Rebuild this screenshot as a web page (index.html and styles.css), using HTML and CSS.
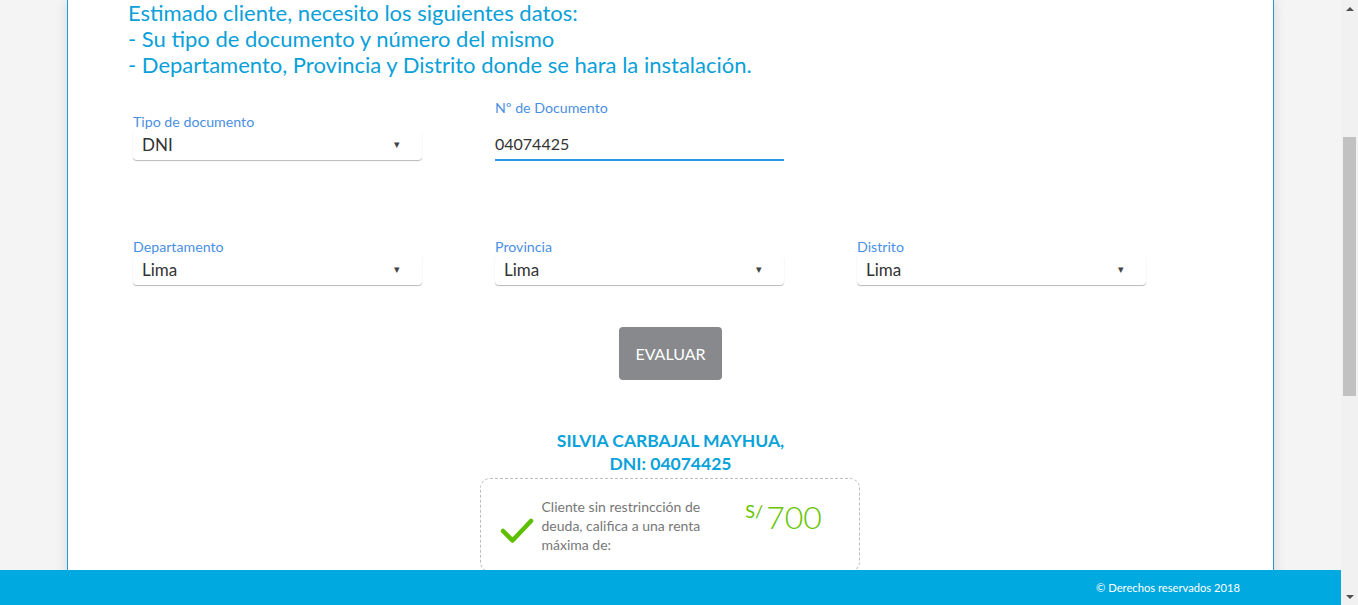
FILE: index.html
```html
<!DOCTYPE html>
<html lang="es">
<head>
<meta charset="utf-8">
<title>Evaluación</title>
<link rel="stylesheet" href="styles.css">
</head>
<body>
<div class="viewport">
  <div class="main">
    <div class="panel">
      <div class="intro">
        Estimado cliente, necesito los siguientes datos:<br>
        - Su tipo de documento y número del mismo<br>
        - Departamento, Provincia y Distrito donde se hara la instalación.
      </div>

      <div class="form-row row-one">
        <div class="field field-select">
          <div class="label">Tipo de documento</div>
          <div class="select"><span>DNI</span><span class="caret">&#9662;</span></div>
        </div>
        <div class="field field-input">
          <div class="label">Nº de Documento</div>
          <div class="input">04074425</div>
        </div>
      </div>

      <div class="form-row row-two">
        <div class="field field-select">
          <div class="label">Departamento</div>
          <div class="select"><span>Lima</span><span class="caret">&#9662;</span></div>
        </div>
        <div class="field field-select">
          <div class="label">Provincia</div>
          <div class="select"><span>Lima</span><span class="caret">&#9662;</span></div>
        </div>
        <div class="field field-select">
          <div class="label">Distrito</div>
          <div class="select"><span>Lima</span><span class="caret">&#9662;</span></div>
        </div>
      </div>

      <div class="actions">
        <button class="btn-evaluar" type="button">EVALUAR</button>
      </div>

      <div class="client-name">SILVIA CARBAJAL MAYHUA,<br>DNI: 04074425</div>

      <div class="result-card">
        <svg class="check" width="34" height="28" viewBox="0 0 34 28">
          <path d="M3 15 L12.5 24.5 L31 5" fill="none" stroke="#5cc000" stroke-width="4.5" stroke-linecap="round" stroke-linejoin="round"/>
        </svg>
        <div class="result-text">Cliente sin restrincción de<br>deuda, califica a una renta<br>máxima de:</div>
        <div class="amount"><span class="currency">S/</span><span class="value">700</span></div>
      </div>
    </div>
  </div>
  <div class="scrollbar">
    <div class="sb-btn"><span class="tri-up"></span></div>
    <div class="sb-track"><div class="sb-thumb"></div></div>
    <div class="sb-btn"><span class="tri-down"></span></div>
  </div>
</div>
<footer class="footer">© Derechos reservados 2018</footer>
</body>
</html>
```

FILE: styles.css
```css
* { box-sizing: border-box; }

html, body {
  margin: 0;
  padding: 0;
  height: 605px;
  overflow: hidden;
}

body {
  font-family: Lato, "Open Sans", "Liberation Sans", sans-serif;
  background: #f4f4f4;
  color: #333;
}

.viewport {
  display: flex;
  height: 605px;
}

.main {
  flex: 1;
  display: flex;
  justify-content: center;
  background: #f4f4f4;
  overflow: hidden;
}

.panel {
  width: 1207px;
  min-height: 700px;
  background: #fff;
  border-left: 1px solid #1e9bd7;
  border-right: 1px solid #1e9bd7;
  box-shadow: 0 0 12px rgba(0, 0, 0, 0.12);
  padding: 0 0 0 60px;
}

.intro {
  color: #0aa0d8;
  font-size: 22px;
  line-height: 26px;
}

.form-row {
  display: grid;
  grid-template-columns: repeat(3, 289px);
  column-gap: 73px;
  align-items: end;
  padding-left: 5px;
}

.row-one { margin-top: 22px; }
.row-two { margin-top: 78px; }

.label {
  color: #4a90e2;
  font-size: 14.2px;
  line-height: 16px;
}

.field-select { margin-bottom: 1px; }

.select {
  height: 30px;
  display: flex;
  align-items: center;
  justify-content: space-between;
  padding: 0 22px 2px 9px;
  font-size: 17px;
  color: #333;
  border-radius: 4px;
  box-shadow: 0 1px 1px rgba(0, 0, 0, 0.28);
}

.caret {
  font-size: 11px;
  color: #444;
}

.input {
  padding: 18px 0 5px 0;
  line-height: 20px;
  font-size: 16px;
  color: #333;
  border-bottom: 2px solid #2f96f0;
}

.actions {
  display: flex;
  justify-content: center;
  margin: 41px 60px 0 0;
}

.btn-evaluar {
  width: 103px;
  height: 53px;
  border: none;
  border-radius: 4px;
  background: #88898c;
  color: #fff;
  font-family: inherit;
  font-size: 16px;
  padding: 0;
}

.client-name {
  margin: 49px 60px 0 0;
  text-align: center;
  color: #0aa2da;
  font-weight: 700;
  font-size: 17.5px;
  line-height: 23px;
}

.result-card {
  width: 380px;
  margin: 3px auto 0;
  position: relative;
  left: -31px;
  border: 1px dashed #bdbdbd;
  border-radius: 10px;
  display: flex;
  align-items: flex-start;
  padding: 18px 20px 16px 19px;
  height: 94px;
}

.check {
  margin-top: 19px;
  flex: none;
}

.result-text {
  margin-left: 8px;
  color: #777;
  font-size: 14px;
  line-height: 19px;
  white-space: nowrap;
}

.amount {
  margin-left: 45px;
  color: #66c400;
  display: flex;
  align-items: flex-start;
}

.currency {
  font-size: 18px;
  line-height: 22px;
  margin-top: 3px;
  margin-right: 3px;
}

.value {
  font-size: 32px;
  font-weight: 300;
  line-height: 40px;
}

.scrollbar {
  width: 17px;
  flex: none;
  background: #f1f1f1;
  display: flex;
  flex-direction: column;
}

.sb-btn {
  height: 17px;
  display: flex;
  align-items: center;
  justify-content: center;
}

.tri-up, .tri-down {
  width: 0;
  height: 0;
  border-left: 4px solid transparent;
  border-right: 4px solid transparent;
}

.tri-up { border-bottom: 4px solid #505050; }
.tri-down { border-top: 4px solid #505050; }

.sb-track {
  flex: 1;
  padding: 120px 2px 0;
}

.sb-thumb {
  height: 259px;
  background: #c1c1c1;
}

.footer {
  position: fixed;
  left: 0;
  bottom: 0;
  width: 1341px;
  height: 35px;
  background: #00a9e0;
  color: #fff;
  font-size: 11.2px;
  line-height: 35px;
  text-align: right;
  padding-right: 101px;
}
```
